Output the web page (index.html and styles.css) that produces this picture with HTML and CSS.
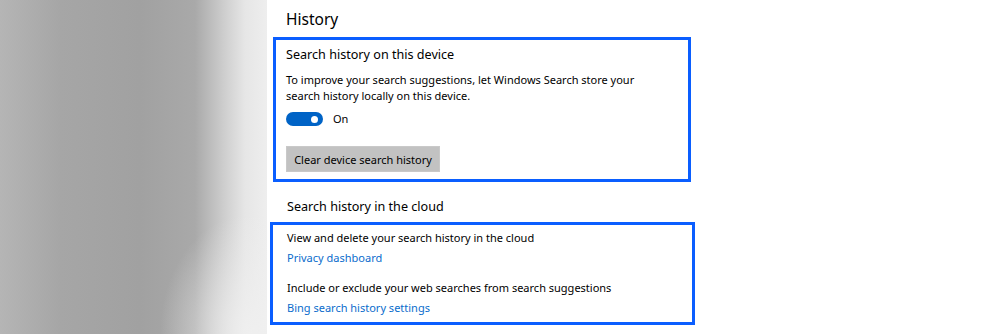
FILE: index.html
```html
<!DOCTYPE html>
<html lang="en">
<head>
  <meta charset="UTF-8" />
  <title>Search history settings</title>
  <link rel="stylesheet" href="styles.css">
</head>
<body>
  <div class="page">
    <div class="backdrop"></div>

    <div class="content">
      <h1>History</h1>

      <section class="box box-device">
        <h2>Search history on this device</h2>
        <p class="desc">To improve your search suggestions, let Windows Search store your search history locally on this device.</p>
        <div class="toggle-row">
          <span class="toggle on"><span class="knob"></span></span>
          <span class="toggle-label">On</span>
        </div>
        <button class="clear-btn">Clear device search history</button>
      </section>

      <h2 class="cloud-title">Search history in the cloud</h2>

      <section class="box box-cloud">
        <p class="desc">View and delete your search history in the cloud</p>
        <a class="link" href="#">Privacy dashboard</a>
        <p class="desc second">Include or exclude your web searches from search suggestions</p>
        <a class="link" href="#">Bing search history settings</a>
      </section>
    </div>
  </div>
</body>
</html>
```

FILE: styles.css
```css
* {
  margin: 0;
  padding: 0;
  box-sizing: border-box;
}

body {
  background: #fff;
  font-family: 'Noto Sans', sans-serif;
  color: #000;
}

.page {
  display: flex;
  height: 334px;
  overflow: hidden;
}

.backdrop {
  width: 267px;
  flex-shrink: 0;
  background:
    radial-gradient(ellipse 90px 120px at 250px 334px, rgba(240, 240, 240, 0.9), rgba(240, 240, 240, 0) 100%),
    linear-gradient(90deg, #b5b5b5 0px, #a6a6a6 60px, #a1a1a1 140px, #a9a9a9 195px, #cfcfcf 225px, #e6e6e6 245px, #eeeeee 267px);
}

.content {
  flex: 1;
  padding-left: 3px;
}

h1 {
  font-weight: 400;
  font-size: 15.5px;
  line-height: 20px;
  margin: 9px 0 8px 16px;
}

h2 {
  font-weight: 400;
  font-size: 12.6px;
  line-height: 16px;
}

.box {
  border: 3px solid #0a5eff;
}

.box-device {
  width: 418px;
  height: 145px;
  margin-left: 3px;
  padding: 7px 0 0 10px;
}

.desc {
  font-size: 11px;
  line-height: 16px;
  margin-top: 9px;
  max-width: 365px;
}

.toggle-row {
  display: flex;
  align-items: center;
  gap: 10px;
  height: 16px;
  margin-top: 7px;
}

.toggle {
  display: flex;
  align-items: center;
  justify-content: flex-end;
  width: 37px;
  height: 14px;
  border-radius: 7px;
  background: #0063c6;
  padding-right: 5px;
}

.knob {
  width: 7px;
  height: 7px;
  border-radius: 50%;
  background: #fff;
}

.toggle-label {
  font-size: 11px;
  line-height: 16px;
}

.clear-btn {
  display: block;
  margin-top: 19px;
  width: 154px;
  height: 26px;
  border: 1px solid #c9c9c9;
  background: #c2c2c2;
  font-family: inherit;
  font-size: 11px;
  color: #000;
}

.cloud-title {
  margin: 17px 0 0 17px;
}

.box-cloud {
  width: 425px;
  height: 103px;
  margin-top: 7px;
  padding: 5px 0 0 14px;
}

.box-cloud .desc {
  margin-top: 0;
}

.box-cloud .desc.second {
  margin-top: 14px;
}

.link {
  display: block;
  color: #0a6ccc;
  text-decoration: none;
  font-size: 11px;
  line-height: 16px;
  margin-top: 4px;
}
```
